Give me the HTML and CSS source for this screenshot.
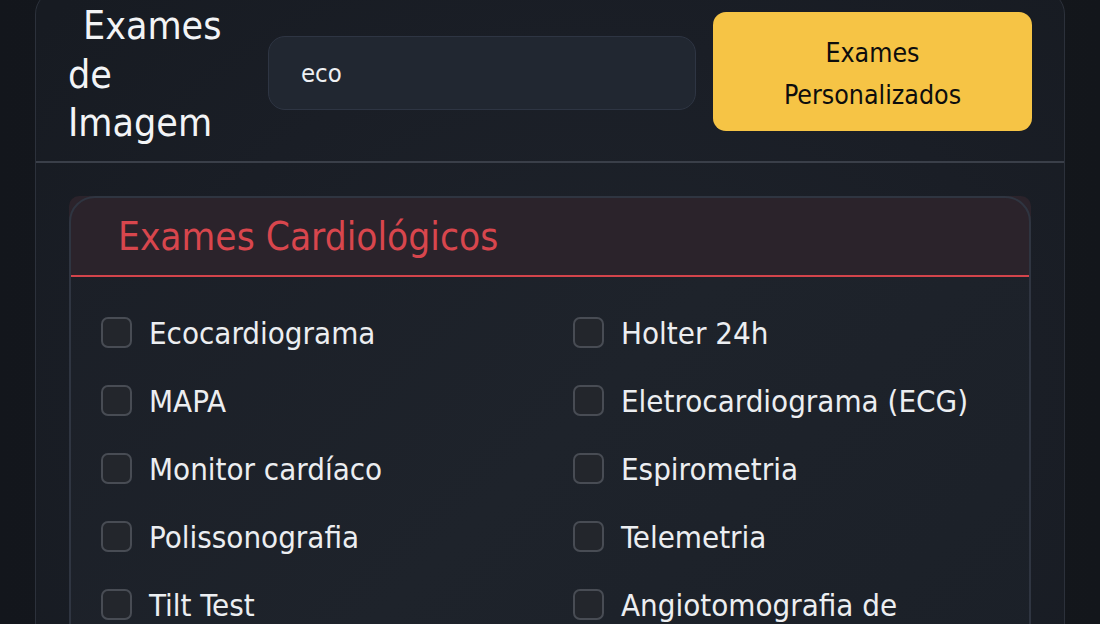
FILE: index.html
```html
<!DOCTYPE html>
<html lang="pt-BR">
<head>
<meta charset="utf-8">
<title>Exames de Imagem</title>
<link rel="stylesheet" href="styles.css">
</head>
<body>
<div class="page">
  <section class="panel">
    <header class="panel-head">
      <h1 class="panel-title">Exames de Imagem</h1>
      <input class="search" type="text" value="eco">
      <button class="btn-custom" type="button">Exames<br>Personalizados</button>
    </header>
    <div class="panel-body">
      <div class="group">
        <div class="group-head">
          <h2 class="group-title">Exames Cardiológicos</h2>
        </div>
        <div class="group-list">
          <label class="item"><input type="checkbox" class="check"><span>Ecocardiograma</span></label>
          <label class="item"><input type="checkbox" class="check"><span>Holter 24h</span></label>
          <label class="item"><input type="checkbox" class="check"><span>MAPA</span></label>
          <label class="item"><input type="checkbox" class="check"><span>Eletrocardiograma (ECG)</span></label>
          <label class="item"><input type="checkbox" class="check"><span>Monitor cardíaco</span></label>
          <label class="item"><input type="checkbox" class="check"><span>Espirometria</span></label>
          <label class="item"><input type="checkbox" class="check"><span>Polissonografia</span></label>
          <label class="item"><input type="checkbox" class="check"><span>Telemetria</span></label>
          <label class="item"><input type="checkbox" class="check"><span>Tilt Test</span></label>
          <label class="item"><input type="checkbox" class="check"><span>Angiotomografia de coronárias</span></label>
        </div>
      </div>
    </div>
  </section>
</div>
</body>
</html>
```

FILE: styles.css
```css
html, body {
  margin: 0;
  padding: 0;
  height: 100%;
  overflow: hidden;
}

body {
  background: linear-gradient(90deg, #13161c 0%, #161a20 50%, #13161b 100%);
  font-family: "DejaVu Sans Condensed", "DejaVu Sans", sans-serif;
  font-stretch: condensed;
  color: #eceef1;
}

.page {
  padding: 0 35px;
}

.panel {
  margin-top: -10px;
  border: 1px solid #2c313b;
  border-radius: 24px;
  background: radial-gradient(ellipse 70% 80% at 55% 55%, #1e232b 0%, #1a1e26 60%, #171b22 100%);
  min-height: 700px;
}

.panel-head {
  display: flex;
  align-items: center;
  padding: 6px 32px 12px 32px;
  border-bottom: 2px solid #3a3f49;
  height: 152px;
}

.panel-title {
  margin: 4px 0 0 0;
  width: 180px;
  flex: none;
  text-indent: 15px;
  font-size: 39px;
  line-height: 48.5px;
  font-weight: normal;
  color: #f3f4f6;
}

.search {
  margin-left: 20px;
  width: 428px;
  height: 74px;
  box-sizing: border-box;
  flex: none;
  padding: 0 0 0 32px;
  border: 1.5px solid #2e3543;
  border-radius: 17px;
  background: #212731;
  color: #eef0f3;
  font-family: inherit;
  font-stretch: condensed;
  font-size: 25.5px;
  outline: none;
}

.btn-custom {
  margin-left: 17px;
  margin-top: -4px;
  width: 319px;
  height: 119px;
  flex: none;
  box-sizing: border-box;
  border: none;
  border-radius: 13px;
  background: #f6c445;
  color: #0d0d0d;
  font-family: inherit;
  font-stretch: condensed;
  font-size: 26.5px;
  line-height: 42px;
  padding: 6px 0 0 0;
}

.panel-body {
  padding: 33px 33px 0 33px;
}

.group {
  position: relative;
  border-radius: 26px;
  background: linear-gradient(135deg, #1b1f27 0%, #1e232b 50%, #1b2028 100%);
}

.group::after {
  content: "";
  position: absolute;
  inset: 0;
  border: 2px solid #2f3541;
  border-radius: 26px;
  pointer-events: none;
}

.group-head {
  height: 81px;
  box-sizing: border-box;
  background: #2b232b;
  border-radius: 10px 10px 0 0;
  border-bottom: 2px solid #d3444b;
  display: flex;
  align-items: center;
  padding: 4px 0 0 49px;
}

.group-title {
  margin: 0;
  font-size: 38.5px;
  font-weight: normal;
  color: #d8464d;
  line-height: 1;
}

.group-list {
  display: grid;
  grid-template-columns: 472px 1fr;
  row-gap: 37px;
  padding: 40px 32px 40px 32px;
}

.item {
  display: flex;
  align-items: flex-start;
  gap: 17px;
  font-size: 31px;
  line-height: 31px;
  color: #eceef1;
}

.item span {
  line-height: 37px;
  margin-top: -2px;
  margin-bottom: -4px;
}

.check {
  appearance: none;
  -webkit-appearance: none;
  margin: 0;
  flex: none;
  width: 31px;
  height: 31px;
  box-sizing: border-box;
  border: 2px solid #484c54;
  border-radius: 7px;
  background: #23262c;
}
```
